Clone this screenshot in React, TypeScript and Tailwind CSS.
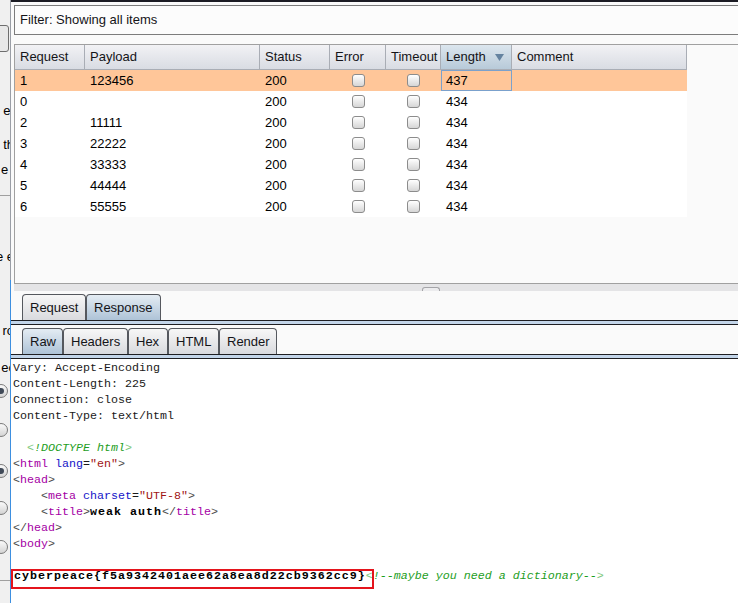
const rows = [
  { req: '1', payload: '123456', status: '200', length: '437', selected: true },
  { req: '0', payload: '', status: '200', length: '434' },
  { req: '2', payload: '11111', status: '200', length: '434' },
  { req: '3', payload: '22222', status: '200', length: '434' },
  { req: '4', payload: '33333', status: '200', length: '434' },
  { req: '5', payload: '44444', status: '200', length: '434' },
  { req: '6', payload: '55555', status: '200', length: '434' },
];

function Checkbox() {
  return (
    <div className="h-[13px] w-[13px] rounded-[3px] border border-[#8c8c8c] bg-gradient-to-b from-white to-[#d6d6d6]" />
  );
}

function HeaderCell({ w, label, active }: { w: string; label: string; active?: boolean }) {
  return (
    <div
      className={`${w} flex h-full items-center justify-between border-r border-[#a9adb5] pl-[5px] pr-[7px] ${
        active ? 'bg-gradient-to-b from-[#dce6ee] to-[#b8cad9]' : ''
      }`}
    >
      <span>{label}</span>
      {active && (
        <svg width="9" height="7" viewBox="0 0 9 7">
          <path d="M0 0h9L4.5 7z" fill="#6583a0" />
        </svg>
      )}
    </div>
  );
}

function Tab({ label, active, w }: { label: string; active?: boolean; w: string }) {
  return (
    <div
      className={`${w} flex h-[26px] items-center rounded-t-[4px] border border-b-0 border-[#55585e] pl-[7px] ${
        active ? 'bg-gradient-to-b from-[#e4ecf3] to-[#aec3d7]' : 'bg-gradient-to-b from-[#f7f7f7] to-[#d9dade]'
      }`}
    >
      {label}
    </div>
  );
}

function TabRule() {
  return <div className="h-[5px] border-y border-[#1e1e22] bg-[#c3d5e9]" />;
}

const P = 'text-[#a400a4]';
const B = 'text-[#4a4a4a]';
const A = 'text-[#1414c8]';
const V = 'text-[#a01414]';
const G = 'text-[#1e9e1e] italic';

function Radio({ on, mt }: { on?: boolean; mt: string }) {
  return (
    <div
      className={`${mt} ml-[-6px] flex h-[14px] w-[14px] items-center justify-center rounded-full border border-[#7a7a7a] bg-gradient-to-b from-[#fafafa] to-[#d4d4d4]`}
    >
      {on && <div className="h-[6px] w-[6px] rounded-full bg-[#404a58]" />}
    </div>
  );
}

function LeftStrip() {
  return (
    <div className="flex w-[10px] shrink-0 flex-col overflow-hidden bg-[#f0f0f0] text-[13px] text-black">
      <div className="ml-[-4px] mt-[25px] h-[27px] w-[13px] rounded-r-[3px] border border-[#6e6e6e] bg-[#e8e8e8]" />
      <div className="mt-[51px] flex h-[16px] justify-end whitespace-nowrap leading-[16px]">
        <span className="mr-[-4px]">et</span>
      </div>
      <div className="mt-[18px] flex h-[16px] justify-end whitespace-nowrap leading-[16px]">
        <span className="mr-[-4px]">th</span>
      </div>
      <div className="mt-[9px] flex h-[16px] justify-start whitespace-nowrap leading-[16px]">
        <span className="ml-[1px]">e</span>
      </div>
      <div className="mt-[17px] h-px bg-[#a0a0a0]" />
      <div className="mt-[53px] flex h-[16px] justify-end whitespace-nowrap leading-[16px]">
        <span className="mr-[-4px]">e e</span>
      </div>
      <div className="mt-[58px] flex h-[16px] justify-end whitespace-nowrap leading-[16px]">
        <span className="mr-[-4px]">ro</span>
      </div>
      <div className="mt-[21px] flex h-[16px] justify-end whitespace-nowrap leading-[16px]">
        <span className="mr-[-5px]">ec</span>
      </div>
      <Radio on mt="mt-[8px]" />
      <Radio mt="mt-[25px]" />
      <Radio on mt="mt-[27px]" />
      <Radio mt="mt-[23px]" />
      <Radio mt="mt-[25px]" />
      <div className="mt-[26px] h-px bg-[#a0a0a0]" />
    </div>
  );
}

export default function App() {
  return (
    <div
      className="flex h-[603px] w-[738px] overflow-hidden bg-[#fafafa] text-[13px] text-[#141418]"
      style={{ fontFamily: '"Liberation Sans", Arial, sans-serif' }}
    >
      <LeftStrip />
      <div className="flex w-px shrink-0 flex-col">
        <div className="h-[280px] bg-[#9a9ea6]" />
        <div className="flex-1 bg-[#3d8fe0]" />
      </div>

      <div className="flex min-w-0 flex-1 flex-col">
        <div className="h-[2px] bg-[#1c1c24]" />

        {/* filter bar */}
        <div className="ml-[3px] mt-[3px] flex h-[30px] items-center border border-r-0 border-[#7c7c7c] bg-[#fcfcfc] pl-[5px]">
          Filter: Showing all items
        </div>

        {/* results table */}
        <div className="ml-[3px] mt-[9px] flex h-[240px] flex-col border-y border-l border-[#a0a0a0] bg-[#fafafa]">
          <div className="flex h-[25px] w-[672px] border-b border-[#a9adb5] bg-gradient-to-b from-[#f2f2f5] to-[#d9dce3]">
            <HeaderCell w="w-[70px]" label="Request" />
            <HeaderCell w="w-[175px]" label="Payload" />
            <HeaderCell w="w-[70px]" label="Status" />
            <HeaderCell w="w-[56px]" label="Error" />
            <HeaderCell w="w-[55px]" label="Timeout" />
            <HeaderCell w="w-[71px]" label="Length" active />
            <HeaderCell w="w-[175px]" label="Comment" />
          </div>
          {rows.map((r) => (
            <div
              key={r.req}
              className={`flex h-[21px] w-[672px] items-center text-black ${r.selected ? 'bg-[#ffc699]' : 'bg-white'}`}
            >
              <div className="w-[70px] pl-[5px]">{r.req}</div>
              <div className="w-[175px] pl-[5px]">{r.payload}</div>
              <div className="w-[70px] pl-[5px]">{r.status}</div>
              <div className="flex w-[56px] justify-center">
                <Checkbox />
              </div>
              <div className="flex w-[55px] justify-center">
                <Checkbox />
              </div>
              <div
                className={`flex h-full w-[71px] items-center pl-[4px] ${
                  r.selected ? 'border border-[#7ba1cc]' : 'border border-transparent'
                }`}
              >
                {r.length}
              </div>
              <div className="w-[175px]" />
            </div>
          ))}
        </div>

        {/* splitter */}
        <div className="ml-[3px] flex h-[7px] bg-[#e4e4e6] pl-[408px]">
          <div className="mt-[3px] h-[4px] w-[18px] rounded-t-[3px] border border-b-0 border-[#a4a4a8] bg-[#ececee]" />
        </div>

        <div className="mt-[3px] flex pl-[11px]">
          <Tab w="w-[64px]" label="Request" />
          <Tab w="w-[75px]" label="Response" active />
        </div>
        <TabRule />

        <div className="mt-[3px] flex pl-[11px]">
          <Tab w="w-[41px]" label="Raw" active />
          <Tab w="w-[65px]" label="Headers" />
          <Tab w="w-[40px]" label="Hex" />
          <Tab w="w-[51px]" label="HTML" />
          <Tab w="w-[58px]" label="Render" />
        </div>
        <TabRule />

        {/* response body */}
        <div
          className="flex-1 whitespace-pre bg-white pl-[2px] pt-[1px] text-[11.67px] leading-[16px] text-[#1a1a1a]"
          style={{ fontFamily: '"Liberation Mono", "Courier New", monospace' }}
        >
          <div>Vary: Accept-Encoding</div>
          <div>Content-Length: 225</div>
          <div>Connection: close</div>
          <div>Content-Type: text/html</div>
          <div> </div>
          <div className={G}>
            {'  '}
            <span className="text-[#7cc87c]">&lt;</span>!DOCTYPE html<span className="text-[#7cc87c]">&gt;</span>
          </div>
          <div>
            <span className={B}>&lt;</span>
            <span className={P}>html</span> <span className={A}>lang</span>=<span className={V}>"en"</span>
            <span className={B}>&gt;</span>
          </div>
          <div>
            <span className={B}>&lt;</span>
            <span className={P}>head</span>
            <span className={B}>&gt;</span>
          </div>
          <div>
            {'    '}
            <span className={B}>&lt;</span>
            <span className={P}>meta</span> <span className={A}>charset</span>=<span className={V}>"UTF-8"</span>
            <span className={B}>&gt;</span>
          </div>
          <div>
            {'    '}
            <span className={B}>&lt;</span>
            <span className={P}>title</span>
            <span className={B}>&gt;</span>
            <span className="font-bold tracking-[1px] text-black">weak auth</span>
            <span className={B}>&lt;/</span>
            <span className={P}>title</span>
            <span className={B}>&gt;</span>
          </div>
          <div>
            <span className={B}>&lt;/</span>
            <span className={P}>head</span>
            <span className={B}>&gt;</span>
          </div>
          <div>
            <span className={B}>&lt;</span>
            <span className={P}>body</span>
            <span className={B}>&gt;</span>
          </div>
          <div> </div>
          <div className="relative">
            <span className="pl-[1px] font-bold tracking-[1px] text-black">
              cyberpeace{'{'}f5a9342401aee62a8ea8d22cb9362cc9{'}'}
            </span>
            <span className={G}>
              <span className="text-[#7cc87c]">&lt;</span>!--maybe you need a dictionary--
              <span className="text-[#7cc87c]">&gt;</span>
            </span>
            <div className="absolute left-[-2px] top-[1px] h-[20px] w-[363px] border-2 border-[#e4141c]" />
          </div>
        </div>
      </div>
    </div>
  );
}
